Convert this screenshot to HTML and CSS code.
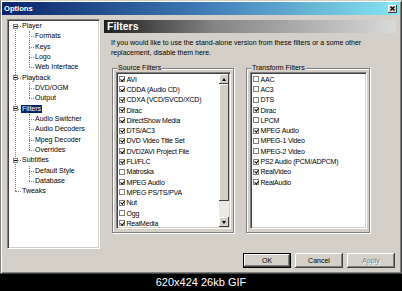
FILE: index.html
```html
<!DOCTYPE html>
<html>
<head>
<meta charset="utf-8">
<link rel="stylesheet" href="styles.css">
</head>
<body>
<div class="window">
  <div class="titlebar">
    <span class="title">Options</span>
    <span class="close"><svg width="5" height="5" viewBox="0 0 5 5"><path d="M0.5 0.5L4.5 4.5M4.5 0.5L0.5 4.5" stroke="#000" stroke-width="1.2"/></svg></span>
  </div>
  <div class="client">
    <div class="main">
      <div class="tree">
        <ul class="nodes root">
          <li><div class="row top"><span class="box"></span><span class="label">Player</span></div>
            <ul class="nodes kids">
              <li><div class="row kid"><span class="label">Formats</span></div></li>
              <li><div class="row kid"><span class="label">Keys</span></div></li>
              <li><div class="row kid"><span class="label">Logo</span></div></li>
              <li><div class="row kid"><span class="label">Web Interface</span></div></li>
            </ul>
          </li>
          <li><div class="row top"><span class="box"></span><span class="label">Playback</span></div>
            <ul class="nodes kids">
              <li><div class="row kid"><span class="label">DVD/OGM</span></div></li>
              <li><div class="row kid"><span class="label">Output</span></div></li>
            </ul>
          </li>
          <li><div class="row top"><span class="box"></span><span class="label sel">Filters</span></div>
            <ul class="nodes kids">
              <li><div class="row kid"><span class="label">Audio Switcher</span></div></li>
              <li><div class="row kid"><span class="label">Audio Decoders</span></div></li>
              <li><div class="row kid"><span class="label">Mpeg Decoder</span></div></li>
              <li><div class="row kid"><span class="label">Overrides</span></div></li>
            </ul>
          </li>
          <li><div class="row top"><span class="box"></span><span class="label">Subtitles</span></div>
            <ul class="nodes kids">
              <li><div class="row kid"><span class="label">Default Style</span></div></li>
              <li><div class="row kid"><span class="label">Database</span></div></li>
            </ul>
          </li>
          <li><div class="row top"><span class="label">Tweaks</span></div></li>
        </ul>
      </div>
      <div class="page">
        <div class="page-head">Filters</div>
        <p class="desc">If you would like to use the stand-alone version from these filters or a some other<br>replacement, disable them here.</p>
        <div class="groups">
          <fieldset class="group source">
            <legend>Source Filters</legend>
            <div class="listbox">
              <div class="items">
                <div class="item"><span class="cb on"></span>AVI</div>
                <div class="item"><span class="cb on"></span>CDDA (Audio CD)</div>
                <div class="item"><span class="cb on"></span>CDXA (VCD/SVCD/XCD)</div>
                <div class="item"><span class="cb on"></span>Dirac</div>
                <div class="item"><span class="cb on"></span>DirectShow Media</div>
                <div class="item"><span class="cb on"></span>DTS/AC3</div>
                <div class="item"><span class="cb on"></span>DVD Video Title Set</div>
                <div class="item"><span class="cb on"></span>DVD2AVI Project File</div>
                <div class="item"><span class="cb on"></span>FLI/FLC</div>
                <div class="item"><span class="cb"></span>Matroska</div>
                <div class="item"><span class="cb on"></span>MPEG Audio</div>
                <div class="item"><span class="cb"></span>MPEG PS/TS/PVA</div>
                <div class="item"><span class="cb on"></span>Nut</div>
                <div class="item"><span class="cb"></span>Ogg</div>
                <div class="item"><span class="cb on"></span>RealMedia</div>
              </div>
              <div class="scrollbar">
                <span class="sb-btn up"></span>
                <span class="sb-thumb"></span>
                <span class="sb-track"></span>
                <span class="sb-btn down"></span>
              </div>
            </div>
          </fieldset>
          <fieldset class="group transform">
            <legend>Transform Filters</legend>
            <div class="listbox">
              <div class="items">
                <div class="item"><span class="cb"></span>AAC</div>
                <div class="item"><span class="cb"></span>AC3</div>
                <div class="item"><span class="cb"></span>DTS</div>
                <div class="item"><span class="cb on"></span>Dirac</div>
                <div class="item"><span class="cb"></span>LPCM</div>
                <div class="item"><span class="cb on"></span>MPEG Audio</div>
                <div class="item"><span class="cb"></span>MPEG-1 Video</div>
                <div class="item"><span class="cb"></span>MPEG-2 Video</div>
                <div class="item"><span class="cb on"></span>PS2 Audio (PCM/ADPCM)</div>
                <div class="item"><span class="cb on"></span>RealVideo</div>
                <div class="item"><span class="cb on"></span>RealAudio</div>
              </div>
            </div>
          </fieldset>
        </div>
      </div>
    </div>
    <div class="buttons">
      <button class="btn default">OK</button>
      <button class="btn">Cancel</button>
      <button class="btn" disabled>Apply</button>
    </div>
  </div>
</div>
<div class="caption">620x424 26kb GIF</div>
</body>
</html>
```
FILE: styles.css
```css
* { box-sizing: border-box; }
html, body { margin: 0; padding: 0; }
body {
  width: 402px;
  height: 291px;
  overflow: hidden;
  background: #000;
  font-family: "Liberation Sans", Arial, sans-serif;
  font-size: 7px;
  color: #000;
}

.window {
  height: 274px;
  background: #d4d0c8;
  border: 1px solid;
  border-color: #d4d0c8 #404040 #404040 #808080;
  box-shadow: inset 1px 1px #fff, inset -1px -1px #808080;
  padding: 1px;
  display: flex;
  flex-direction: column;
}

.titlebar {
  height: 13px;
  flex: none;
  display: flex;
  align-items: center;
  justify-content: space-between;
  padding: 0 3px 0 2px;
  background: linear-gradient(to right, #0a246a 0%, #3f7ab6 50%, #86e6f0 100%);
}
.title { color: #fff; font-weight: bold; font-size: 7.6px; }
.close {
  width: 9px;
  height: 8px;
  display: flex;
  align-items: center;
  justify-content: center;
  background: #d4d0c8;
  box-shadow: inset -1px -1px #404040, inset 1px 1px #fff;
}

.client {
  flex: 1;
  display: flex;
  flex-direction: column;
  padding: 4px 4px 0 5px;
}
.main { display: flex; gap: 4px; height: 230px; }

.tree {
  width: 93px;
  flex: none;
  background: #fff;
  border: 1px solid;
  border-color: #808080 #fff #fff #808080;
  box-shadow: inset 1px 1px #404040, inset -1px -1px #d4d0c8;
  padding: 1px;
}
.nodes { list-style: none; margin: 0; padding: 0; position: relative; }
.root::before {
  content: "";
  position: absolute;
  left: 6px;
  top: 5.2px;
  bottom: 5.2px;
  border-left: 1px dotted #808080;
}
.kids::before {
  content: "";
  position: absolute;
  left: 20px;
  top: 0;
  bottom: 5.2px;
  border-left: 1px dotted #808080;
}
.row {
  height: 10.33px;
  display: flex;
  align-items: center;
  position: relative;
  white-space: nowrap;
}
.row::before {
  content: "";
  position: absolute;
  top: 5px;
  border-top: 1px dotted #808080;
}
.row.top { padding-left: 13px; }
.row.top::before { left: 6px; width: 6px; }
.row.kid { padding-left: 26px; }
.row.kid::before { left: 20px; width: 5px; }
.box {
  position: absolute;
  left: 3.5px;
  top: 2.7px;
  width: 5px;
  height: 5px;
  border: 1px solid #808080;
  background: #fff;
  z-index: 1;
}
.box::after {
  content: "";
  position: absolute;
  left: 0;
  top: 1px;
  width: 3px;
  height: 1px;
  background: #000;
}
.label { line-height: 8px; }
.label.sel {
  background: #0a246a;
  color: #fff;
  padding: 0 1px;
  margin-left: -1px;
}

.page { flex: 1; min-width: 0; }
.page-head {
  margin-top: 1px;
  height: 13px;
  line-height: 13px;
  padding-left: 3px;
  color: #fff;
  font-weight: bold;
  font-size: 10.5px;
  background: linear-gradient(to right, #1e1e1e 0%, #858585 38%, #d9d9d9 100%);
}
.desc {
  margin: 5px 0 0 7px;
  line-height: 9.5px;
  white-space: nowrap;
}
.groups {
  display: flex;
  gap: 12px;
  margin-top: 7px;
  padding-left: 8px;
}
.group {
  margin: 0;
  min-width: 0;
  padding: 0 2px 3px 3px;
  border: 1px solid #808080;
  box-shadow: inset 1px 1px #fff, 1px 1px #fff;
}
.group.source { width: 122px; }
.group.transform { width: 124px; }
.group legend {
  padding: 0 1px;
  margin-left: 1px;
  line-height: 8px;
  background: #d4d0c8;
  position: relative;
}

.listbox {
  height: 157px;
  display: flex;
  background: #fff;
  border: 1px solid;
  border-color: #808080 #fff #fff #808080;
  box-shadow: inset 1px 1px #404040, inset -1px -1px #d4d0c8;
  padding: 1px;
  overflow: hidden;
}
.items { flex: 1; min-width: 0; overflow: hidden; }
.item {
  height: 10.3px;
  display: flex;
  align-items: center;
  white-space: nowrap;
  padding-left: 1px;
  letter-spacing: -0.2px;
}
.cb {
  flex: none;
  width: 6px;
  height: 6px;
  margin-right: 1.5px;
  border: 1px solid #808080;
  background: #fff;
  position: relative;
}
.cb.on::after {
  content: "";
  position: absolute;
  left: 1.2px;
  top: -0.6px;
  width: 1.6px;
  height: 3.4px;
  border: solid #000;
  border-width: 0 1.3px 1.3px 0;
  transform: rotate(40deg);
}

.scrollbar {
  width: 10px;
  flex: none;
  display: flex;
  flex-direction: column;
}
.sb-btn, .sb-thumb {
  background: #d4d0c8;
  box-shadow: inset -1px -1px #404040, inset 1px 1px #fff;
}
.sb-btn {
  height: 10px;
  flex: none;
  display: flex;
  align-items: center;
  justify-content: center;
}
.sb-btn::after {
  content: "";
  border-left: 2.5px solid transparent;
  border-right: 2.5px solid transparent;
}
.sb-btn.up::after { border-bottom: 3px solid #000; }
.sb-btn.down::after { border-top: 3px solid #000; }
.sb-thumb { height: 117px; flex: none; }
.sb-track { flex: 1; background: #ebe9e4; }

.buttons {
  display: flex;
  justify-content: flex-end;
  gap: 4px;
  margin-top: 4px;
  margin-right: 1px;
}
.btn {
  width: 48px;
  height: 15px;
  padding: 0;
  border: none;
  font: inherit;
  color: #000;
  background: #d4d0c8;
  box-shadow: inset -1px -1px #404040, inset 1px 1px #fff, inset -2px -2px #808080;
}
.btn.default {
  box-shadow: inset 0 0 0 1px #000, inset -2px -2px #404040, inset 2px 2px #fff, inset -3px -3px #808080;
}
.btn:disabled { color: #808080; text-shadow: 1px 1px #fff; }

.caption {
  height: 17px;
  line-height: 17px;
  text-align: center;
  color: #fff;
  font-size: 11px;
}
```
